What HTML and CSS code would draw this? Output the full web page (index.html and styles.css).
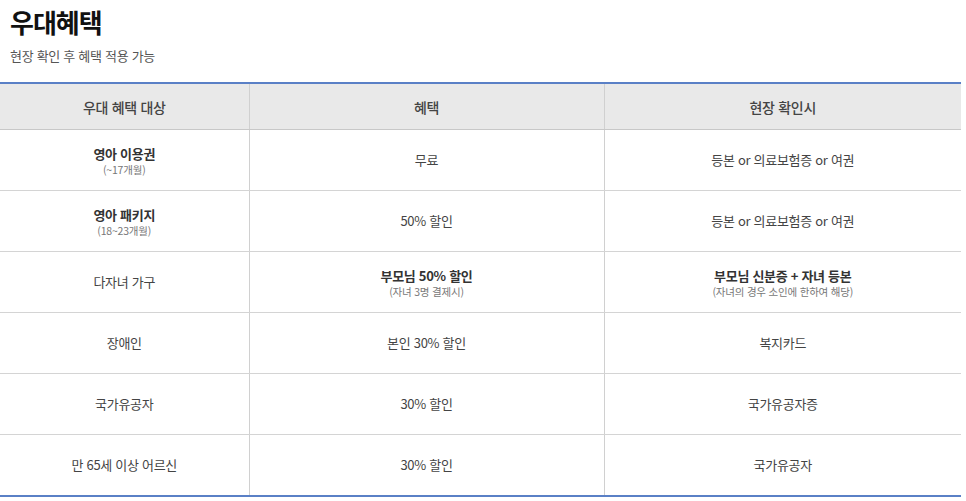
FILE: index.html
```html
<!DOCTYPE html>
<html lang="ko">
<head>
<meta charset="utf-8">
<link rel="stylesheet" href="styles.css">
</head>
<body>
<div class="page">
  <header class="head">
    <h1 class="title">우대혜택</h1>
    <p class="desc">현장 확인 후 혜택 적용 가능</p>
  </header>
  <table class="benefits">
    <colgroup>
      <col class="c1"><col class="c2"><col class="c3">
    </colgroup>
    <thead>
      <tr><th>우대 혜택 대상</th><th>혜택</th><th>현장 확인시</th></tr>
    </thead>
    <tbody>
      <tr>
        <td><strong>영아 이용권</strong><span class="sub">(~17개월)</span></td>
        <td>무료</td>
        <td>등본 or 의료보험증 or 여권</td>
      </tr>
      <tr>
        <td><strong>영아 패키지</strong><span class="sub">(18~23개월)</span></td>
        <td>50% 할인</td>
        <td>등본 or 의료보험증 or 여권</td>
      </tr>
      <tr>
        <td>다자녀 가구</td>
        <td><strong>부모님 50% 할인</strong><span class="sub">(자녀 3명 결제시)</span></td>
        <td><strong>부모님 신분증 + 자녀 등본</strong><span class="sub">(자녀의 경우 소인에 한하여 해당)</span></td>
      </tr>
      <tr>
        <td>장애인</td>
        <td>본인 30% 할인</td>
        <td>복지카드</td>
      </tr>
      <tr>
        <td>국가유공자</td>
        <td>30% 할인</td>
        <td>국가유공자증</td>
      </tr>
      <tr>
        <td>만 65세 이상 어르신</td>
        <td>30% 할인</td>
        <td>국가유공자</td>
      </tr>
    </tbody>
  </table>
</div>
</body>
</html>
```

FILE: styles.css
```css
html, body {
  margin: 0;
  padding: 0;
  background: #fff;
}
body {
  font-family: "Noto Sans CJK KR", "Noto Sans", sans-serif;
  color: #333;
}
.page {
  width: 961px;
}
.head {
  padding: 4px 0 0 10px;
  height: 82px;
  box-sizing: border-box;
}
.title {
  margin: 0;
  font-size: 26px;
  line-height: 36px;
  font-weight: 700;
  color: #111;
  letter-spacing: -1px;
}
.desc {
  margin: 7px 0 0 0;
  font-size: 13px;
  line-height: 18px;
  color: #555;
  letter-spacing: -0.3px;
}
.benefits {
  width: 961px;
  border-collapse: collapse;
  table-layout: fixed;
  border-top: 2px solid #5a80c6;
  border-bottom: 2px solid #5a80c6;
}
.c1 { width: 249px; }
.c2 { width: 355px; }
.c3 { width: 357px; }
.benefits th {
  background: #e9e9e9;
  height: 45px;
  padding: 0;
  font-size: 14px;
  font-weight: 500;
  color: #444;
  border-bottom: 1px solid #c8c8c8;
  border-left: 1px solid #d0d0d0;
  letter-spacing: -0.3px;
}
.benefits td {
  height: 60px;
  padding: 0;
  text-align: center;
  vertical-align: middle;
  font-size: 13px;
  color: #444;
  border-bottom: 1px solid #d4d4d4;
  border-left: 1px solid #d0d0d0;
  letter-spacing: -0.3px;
  line-height: 18px;
}
.benefits th:first-child,
.benefits td:first-child {
  border-left: none;
}
.benefits tbody tr:last-child td {
  border-bottom: none;
}
.benefits strong {
  display: block;
  font-weight: 700;
  color: #333;
  font-size: 13px;
  line-height: 19px;
}
.sub {
  display: block;
  font-size: 10.5px;
  line-height: 14px;
  color: #777;
  letter-spacing: -0.2px;
}
```
